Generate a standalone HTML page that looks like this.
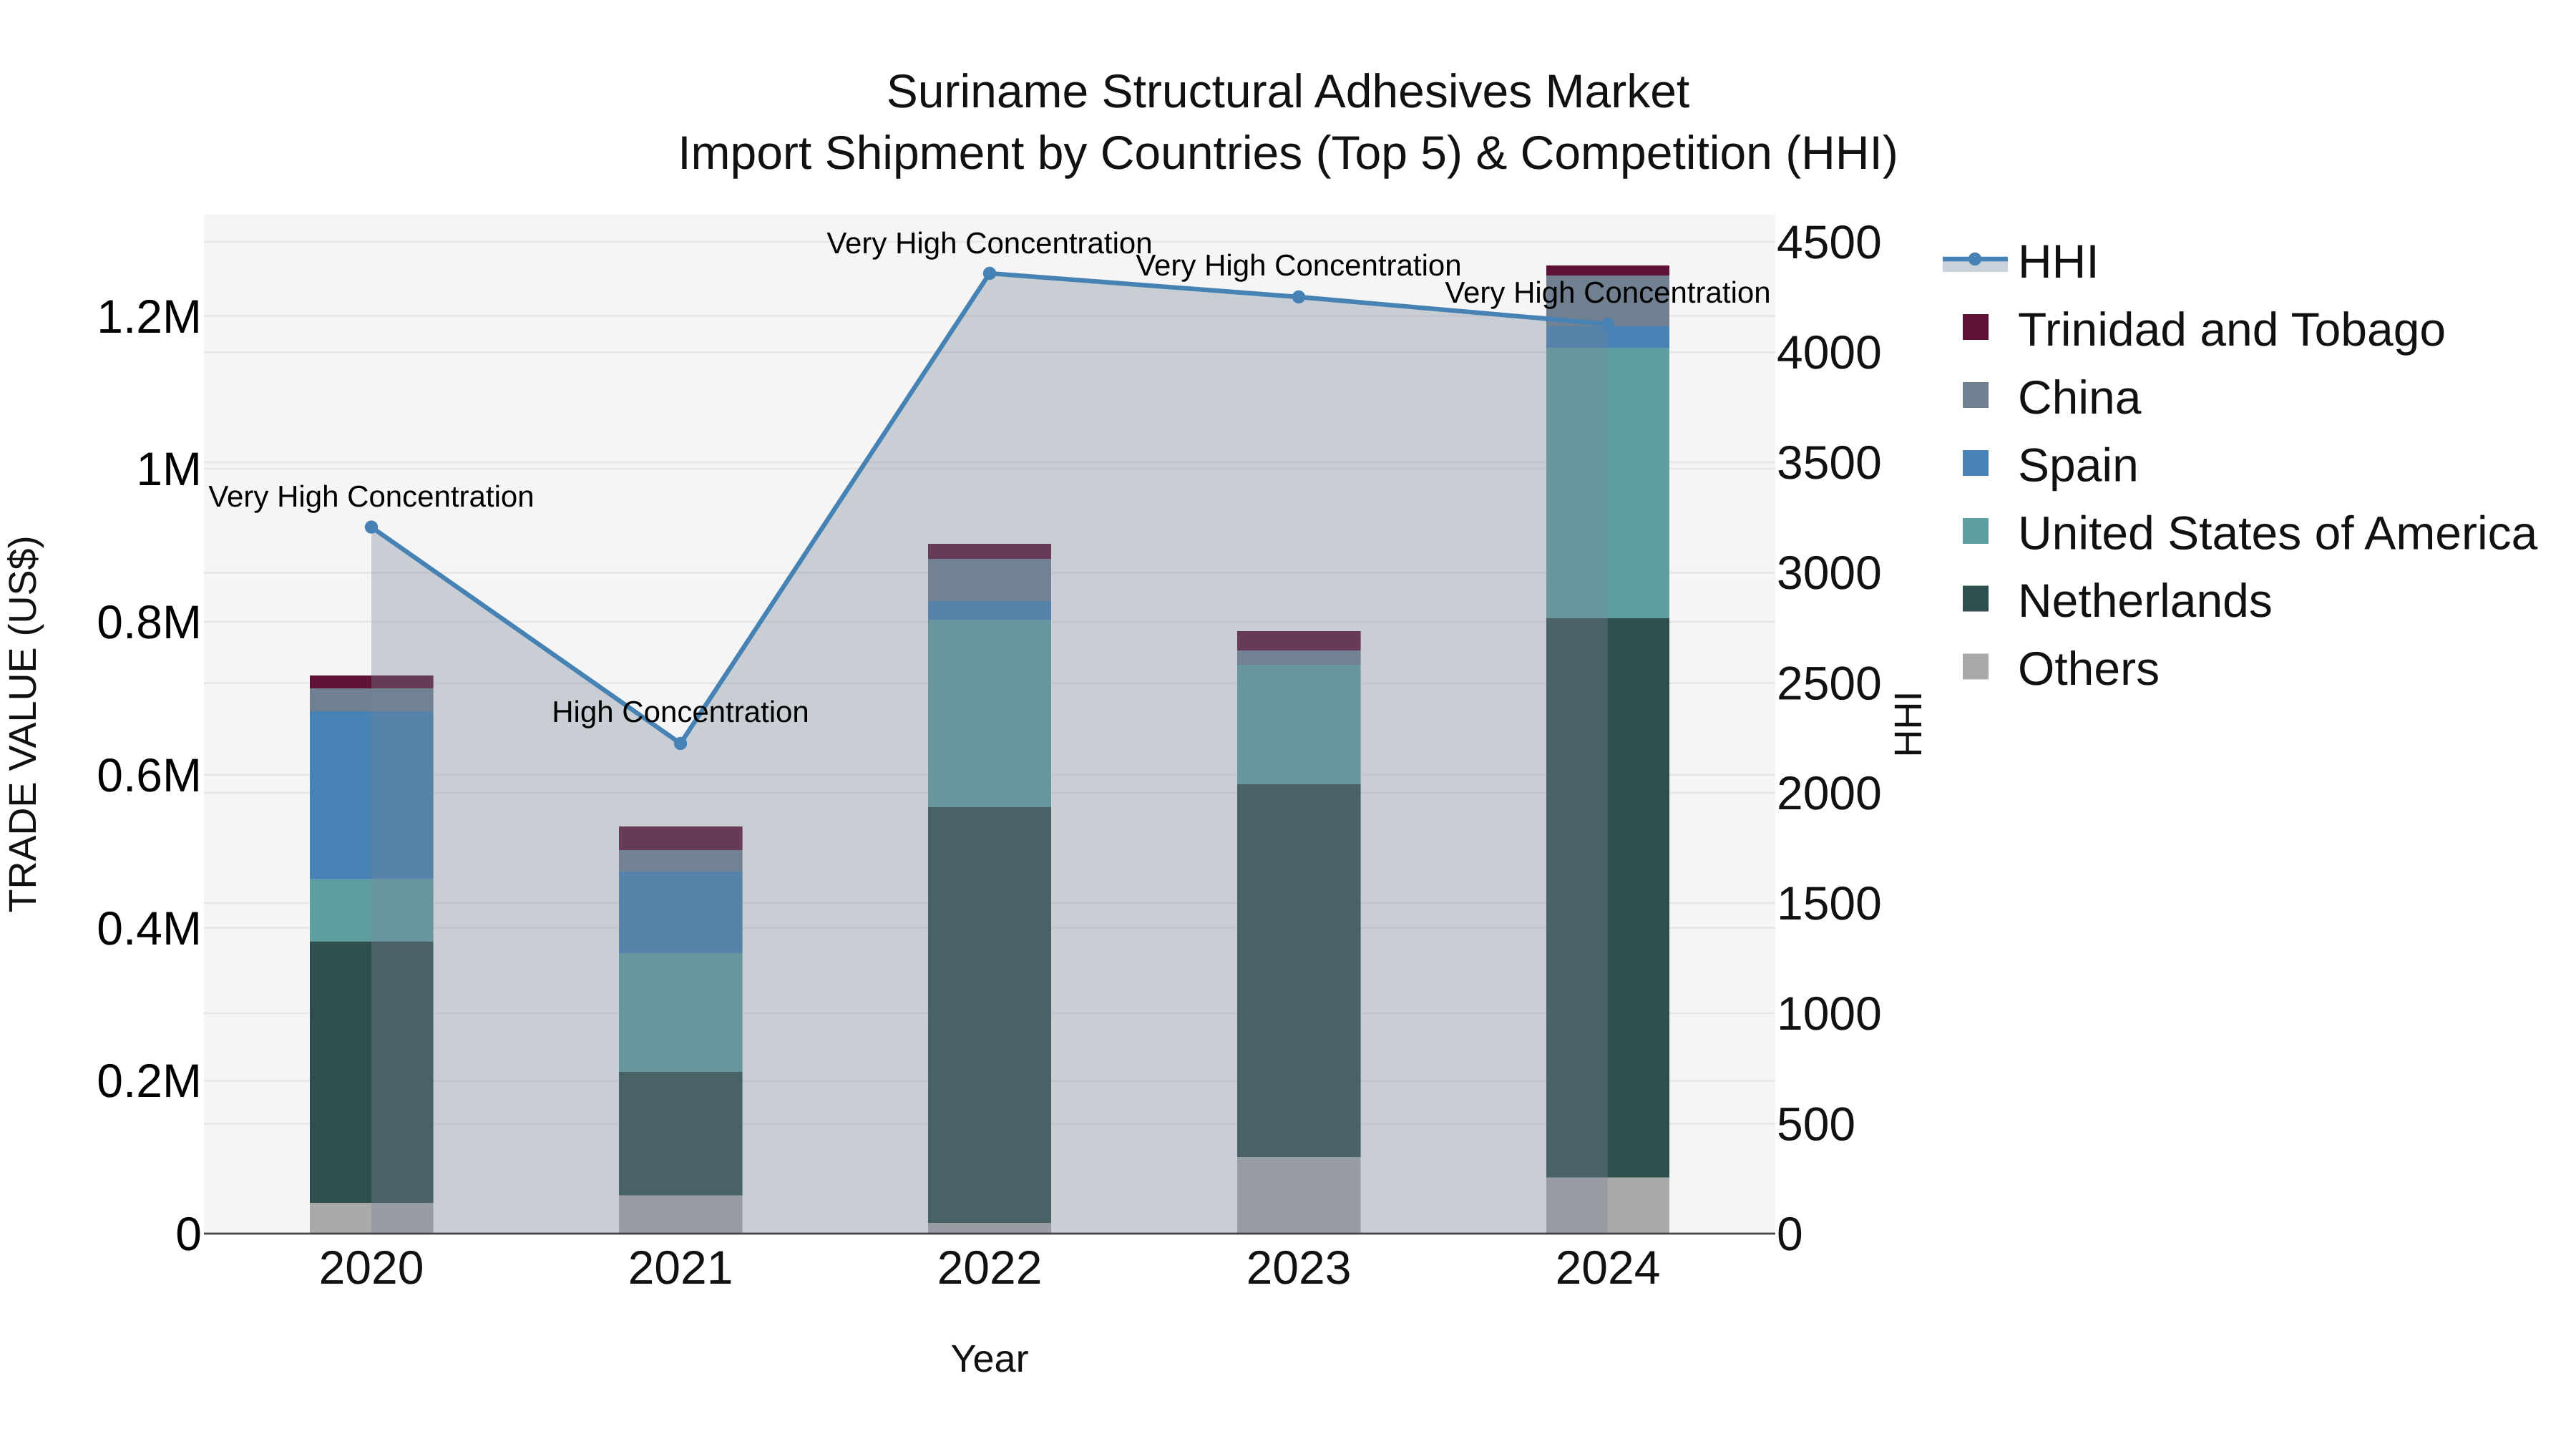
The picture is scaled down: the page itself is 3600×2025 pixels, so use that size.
<!DOCTYPE html>
<html lang="en">
<head>
<meta charset="utf-8">
<title>Suriname Structural Adhesives Market</title>
<style>
html,body{margin:0;padding:0;background:#fff;width:3600px;height:2025px;overflow:hidden}
svg{display:block}
text{font-family:"Liberation Sans",Arial,sans-serif;text-rendering:geometricPrecision}
.tick{font-size:66px;fill:#111}
.tl{font-size:66px;fill:#000}
.leg{font-size:66px;fill:#111}
.ann{font-size:42px;fill:#000;text-anchor:middle}
.ttl{font-size:66px;fill:#111;text-anchor:middle}
.axt{font-size:54px;fill:#111}
</style>
</head>
<body>
<svg width="3600" height="2025" viewBox="0 0 3600 2025" xmlns="http://www.w3.org/2000/svg">
<rect width="3600" height="2025" fill="#fff"/>
<rect x="285" y="300" width="2196" height="1424" fill="#f5f5f5"/>
<g stroke="#e6e6e6" stroke-width="2.6">
<line x1="285" x2="2481" y1="338" y2="338"/>
<line x1="285" x2="2481" y1="441.3" y2="441.3"/>
<line x1="285" x2="2481" y1="492.3" y2="492.3"/>
<line x1="285" x2="2481" y1="646" y2="646"/>
<line x1="285" x2="2481" y1="655" y2="655"/>
<line x1="285" x2="2481" y1="800.4" y2="800.4"/>
<line x1="285" x2="2481" y1="869" y2="869"/>
<line x1="285" x2="2481" y1="954.7" y2="954.7"/>
<line x1="285" x2="2481" y1="1083" y2="1083"/>
<line x1="285" x2="2481" y1="1108" y2="1108"/>
<line x1="285" x2="2481" y1="1262" y2="1262"/>
<line x1="285" x2="2481" y1="1296.7" y2="1296.7"/>
<line x1="285" x2="2481" y1="1416" y2="1416"/>
<line x1="285" x2="2481" y1="1510.5" y2="1510.5"/>
<line x1="285" x2="2481" y1="1570.6" y2="1570.6"/>
</g>
<!-- 2020 -->
<g>
<rect x="433" y="944" width="172.6" height="18" fill="#5f1235"/>
<rect x="433" y="962" width="172.6" height="32" fill="#708090"/>
<rect x="433" y="994" width="172.6" height="234.8" fill="#4682b4"/>
<rect x="433" y="1228.8" width="172.6" height="86.9" fill="#5f9ea0"/>
<rect x="433" y="1315.7" width="172.6" height="365.3" fill="#2f4f4f"/>
<rect x="433" y="1681" width="172.6" height="43" fill="#a9a9a9"/>
</g>
<!-- 2021 -->
<g>
<rect x="865" y="1155" width="172.6" height="33" fill="#5f1235"/>
<rect x="865" y="1188" width="172.6" height="29.6" fill="#708090"/>
<rect x="865" y="1217.6" width="172.6" height="115.1" fill="#4682b4"/>
<rect x="865" y="1332.7" width="172.6" height="165.3" fill="#5f9ea0"/>
<rect x="865" y="1498" width="172.6" height="172.6" fill="#2f4f4f"/>
<rect x="865" y="1670.6" width="172.6" height="53.4" fill="#a9a9a9"/>
</g>
<!-- 2022 -->
<g>
<rect x="1297" y="760" width="172" height="21" fill="#5f1235"/>
<rect x="1297" y="781" width="172" height="59" fill="#708090"/>
<rect x="1297" y="840" width="172" height="26.7" fill="#4682b4"/>
<rect x="1297" y="866.7" width="172" height="261.3" fill="#5f9ea0"/>
<rect x="1297" y="1128" width="172" height="581" fill="#2f4f4f"/>
<rect x="1297" y="1709" width="172" height="15" fill="#a9a9a9"/>
</g>
<!-- 2023 -->
<g>
<rect x="1729" y="882" width="172.6" height="27" fill="#5f1235"/>
<rect x="1729" y="909" width="172.6" height="20" fill="#708090"/>
<rect x="1729" y="929" width="172.6" height="167" fill="#5f9ea0"/>
<rect x="1729" y="1096" width="172.6" height="521" fill="#2f4f4f"/>
<rect x="1729" y="1617" width="172.6" height="107" fill="#a9a9a9"/>
</g>
<!-- 2024 -->
<g>
<rect x="2161" y="371" width="172" height="14" fill="#5f1235"/>
<rect x="2161" y="385" width="172" height="71" fill="#708090"/>
<rect x="2161" y="456" width="172" height="30.7" fill="#4682b4"/>
<rect x="2161" y="486.7" width="172" height="377.3" fill="#5f9ea0"/>
<rect x="2161" y="864" width="172" height="781.7" fill="#2f4f4f"/>
<rect x="2161" y="1645.7" width="172" height="78.3" fill="#a9a9a9"/>
</g>
<!-- HHI area and line -->
<polygon points="519,736.6 951,1039 1383,382 1815,415 2247,453 2247,1724 519,1724" fill="rgb(120,134,152)" fill-opacity="0.35"/>
<polyline points="519,736.6 951,1039 1383,382 1815,415 2247,453" fill="none" stroke="#4682b4" stroke-width="6.4"/>
<g fill="#4682b4">
<circle cx="519" cy="736.6" r="9.2"/>
<circle cx="951" cy="1039" r="9.2"/>
<circle cx="1383" cy="382" r="9.2"/>
<circle cx="1815" cy="415" r="9.2"/>
<circle cx="2247" cy="453" r="9.2"/>
</g>
<line x1="285" x2="2481" y1="1724" y2="1724" stroke="#444" stroke-width="2.8"/>
<!-- Title -->
<text class="ttl" x="1800" y="150">Suriname Structural Adhesives Market</text>
<text class="ttl" x="1800" y="236">Import Shipment by Countries (Top 5) &amp; Competition (HHI)</text>
<!-- Annotations -->
<text class="ann" x="519" y="708">Very High Concentration</text>
<text class="ann" x="951" y="1009">High Concentration</text>
<text class="ann" x="1383" y="354">Very High Concentration</text>
<text class="ann" x="1815" y="385">Very High Concentration</text>
<text class="ann" x="2247" y="423">Very High Concentration</text>
<!-- Left ticks -->
<g class="tl" text-anchor="end">
<text class="tl" x="282" y="465">1.2M</text>
<text class="tl" x="282" y="678">1M</text>
<text class="tl" x="282" y="892">0.8M</text>
<text class="tl" x="282" y="1106">0.6M</text>
<text class="tl" x="282" y="1320">0.4M</text>
<text class="tl" x="282" y="1533">0.2M</text>
<text class="tl" x="282" y="1747">0</text>
</g>
<!-- Right ticks -->
<g>
<text class="tick" x="2483" y="361">4500</text>
<text class="tick" x="2483" y="515">4000</text>
<text class="tick" x="2483" y="669">3500</text>
<text class="tick" x="2483" y="823">3000</text>
<text class="tick" x="2483" y="977.5">2500</text>
<text class="tick" x="2483" y="1131">2000</text>
<text class="tick" x="2483" y="1285">1500</text>
<text class="tick" x="2483" y="1439">1000</text>
<text class="tick" x="2483" y="1593.5">500</text>
<text class="tick" x="2483" y="1747">0</text>
</g>
<!-- X ticks -->
<g text-anchor="middle">
<text class="tick" x="519" y="1794">2020</text>
<text class="tick" x="951" y="1794">2021</text>
<text class="tick" x="1383" y="1794">2022</text>
<text class="tick" x="1815" y="1794">2023</text>
<text class="tick" x="2247" y="1794">2024</text>
</g>
<!-- Axis titles -->
<text class="axt" x="1383" y="1917" text-anchor="middle">Year</text>
<text class="axt" text-anchor="middle" transform="translate(50 1012) rotate(-90)">TRADE VALUE (US$)</text>
<text class="axt" text-anchor="middle" transform="translate(2685 1012) rotate(-90)">HHI</text>
<!-- Legend -->
<rect x="2715" y="362" width="91" height="18" fill="#cbd1da"/>
<line x1="2715" x2="2806" y1="362" y2="362" stroke="#4682b4" stroke-width="6.4"/>
<circle cx="2760" cy="362" r="9.2" fill="#4682b4"/>
<rect x="2743" y="439" width="36" height="36" fill="#5f1235"/>
<rect x="2743" y="534" width="36" height="36" fill="#708090"/>
<rect x="2743" y="629" width="36" height="36" fill="#4682b4"/>
<rect x="2743" y="724" width="36" height="36" fill="#5f9ea0"/>
<rect x="2743" y="818.5" width="36" height="36" fill="#2f4f4f"/>
<rect x="2743" y="913.5" width="36" height="36" fill="#a9a9a9"/>
<text class="leg" x="2820" y="388">HHI</text>
<text class="leg" x="2820" y="483">Trinidad and Tobago</text>
<text class="leg" x="2820" y="578">China</text>
<text class="leg" x="2820" y="672.5">Spain</text>
<text class="leg" x="2820" y="767.5">United States of America</text>
<text class="leg" x="2820" y="862">Netherlands</text>
<text class="leg" x="2820" y="957">Others</text>
</svg>
</body>
</html>
